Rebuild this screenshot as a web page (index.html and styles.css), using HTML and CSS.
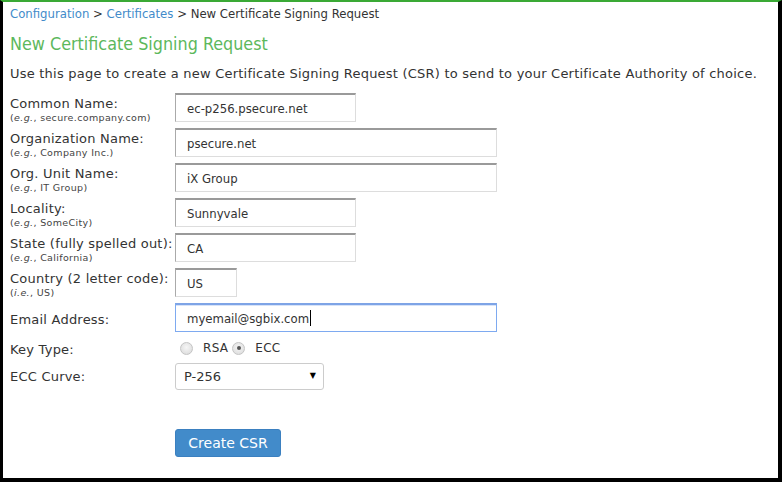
FILE: index.html
```html
<!DOCTYPE html>
<html>
<head>
<meta charset="utf-8">
<link rel="stylesheet" href="styles.css">
</head>
<body>
<div class="frame">
  <div class="crumb"><a href="#">Configuration</a> &gt; <a href="#">Certificates</a> &gt; New Certificate Signing Request</div>
  <h1 class="title">New Certificate Signing Request</h1>
  <p class="intro">Use this page to create a new Certificate Signing Request (CSR) to send to your Certificate Authority of choice.</p>
  <form class="form">
    <div class="row">
      <label class="label">Common Name:<span class="hint">(<i>e.g.</i>, secure.company.com)</span></label>
      <input class="field w-md" type="text" value="ec-p256.psecure.net">
    </div>
    <div class="row">
      <label class="label">Organization Name:<span class="hint">(<i>e.g.</i>, Company Inc.)</span></label>
      <input class="field w-lg" type="text" value="psecure.net">
    </div>
    <div class="row">
      <label class="label">Org. Unit Name:<span class="hint">(<i>e.g.</i>, IT Group)</span></label>
      <input class="field w-lg" type="text" value="iX Group">
    </div>
    <div class="row">
      <label class="label">Locality:<span class="hint">(<i>e.g.</i>, SomeCity)</span></label>
      <input class="field w-md" type="text" value="Sunnyvale">
    </div>
    <div class="row">
      <label class="label">State (fully spelled out):<span class="hint">(<i>e.g.</i>, California)</span></label>
      <input class="field w-md" type="text" value="CA">
    </div>
    <div class="row">
      <label class="label">Country (2 letter code):<span class="hint">(<i>i.e.</i>, US)</span></label>
      <input class="field w-sm" type="text" value="US">
    </div>
    <div class="row">
      <label class="label single">Email Address:</label>
      <div class="field w-lg focus">myemail@sgbix.com<span class="caret"></span></div>
    </div>
    <div class="row row-radio">
      <label class="label single">Key Type:</label>
      <div class="radios">
        <input class="radio" type="radio" name="kt" id="rsa"><label for="rsa" class="rlabel">RSA</label>
        <input class="radio" type="radio" name="kt" id="ecc" checked><label for="ecc" class="rlabel">ECC</label>
      </div>
    </div>
    <div class="row row-select">
      <label class="label single">ECC Curve:</label>
      <span class="select-wrap"><select class="select"><option>P-256</option><option>P-384</option></select></span>
    </div>
    <div class="actions">
      <button type="button" class="btn">Create CSR</button>
    </div>
  </form>
</div>
</body>
</html>
```
FILE: styles.css
```css
* { box-sizing: border-box; }
html, body { margin: 0; padding: 0; background: #fff; }
body { font-family: "DejaVu Sans", Verdana, sans-serif; color: #333; }

.frame {
  width: 782px;
  height: 482px;
  border-top: 2px solid #3aa935;
  border-left: 3px solid #000;
  border-right: 4px solid #000;
  border-bottom: 4px solid #000;
  padding: 2px 7px 0;
}

.crumb {
  font-family: "DejaVu Sans Condensed", "DejaVu Sans", sans-serif;
  font-size: 13px;
  line-height: 20px;
  color: #333;
}
.crumb a { color: #428bca; text-decoration: none; }

.title {
  margin: 8px 0 0;
  font-family: "DejaVu Sans Condensed", "DejaVu Sans", sans-serif;
  font-size: 17.8px;
  line-height: 24px;
  font-weight: normal;
  color: #5cb85c;
}

.intro { margin: 8px 0 0; font-size: 13px; line-height: 20px; letter-spacing: 0.22px; }

.form { margin-top: 9px; display: flex; flex-direction: column; }

.row { display: flex; align-items: flex-start; height: 29px; margin-bottom: 6px; }

.label {
  width: 165px;
  flex: none;
  font-size: 13px;
  line-height: 16px;
  letter-spacing: 0.22px;
  padding-top: 3px;
  white-space: nowrap;
  display: flex;
  flex-direction: column;
}
.label.single { padding-top: 2px; line-height: 29px; }

.hint { font-size: 9.5px; line-height: 12px; letter-spacing: 0.35px; color: #444; }

.field {
  height: 29px;
  border: 1px solid #ddd;
  border-top: 2px solid #9a9a9a;
  border-left: 1px solid #aaa;
  padding: 0 11px;
  font-family: "DejaVu Sans Condensed", "DejaVu Sans", sans-serif;
  font-size: 13px;
  color: #333;
  background: #fff;
  outline: none;
}
.w-sm { width: 62px; }
.w-md { width: 181px; }
.w-lg { width: 322px; }

.focus {
  display: flex;
  align-items: center;
  border: 1px solid #7eaaf0;
  border-top: 2px solid #7ea4e6;
  box-shadow: inset 0 1px 0 #d7e3f8;
}
.caret { width: 1px; height: 16px; background: #000; margin-left: 1px; }

.row-radio { height: 20px; margin-bottom: 5px; }
.row-radio .label.single { line-height: 20px; padding-top: 2px; }
.radios { display: flex; align-items: center; height: 20px; padding-left: 5px; font-size: 12px; }
.radio {
  appearance: none;
  -webkit-appearance: none;
  width: 13px;
  height: 13px;
  margin: 0;
  border-radius: 50%;
  border: 1px solid #c4c4c4;
  background: radial-gradient(circle at 50% 40%, #f6f6f6 0%, #d8d8d8 100%);
  position: relative;
}
.radio:checked::after {
  content: "";
  position: absolute;
  left: 3.5px; top: 3.5px;
  width: 4px; height: 4px;
  border-radius: 50%;
  background: #555;
}
.rlabel { margin-left: 10px; margin-right: 4px; color: #333; letter-spacing: 0.3px; }

.row-select { height: 27px; }
.row-select .label.single { line-height: 27px; padding-top: 0; }
.select-wrap { position: relative; display: inline-block; }
.select-wrap::after {
  content: "▼";
  position: absolute;
  right: 8px;
  top: 8px;
  font-size: 8px;
  color: #000;
  pointer-events: none;
}
.select {
  appearance: none;
  -webkit-appearance: none;
  width: 149px;
  height: 27px;
  border: 1px solid #ccc;
  border-radius: 3px;
  background: #fff;
  padding: 0 8px;
  font-family: "DejaVu Sans", Verdana, sans-serif;
  font-size: 13px;
  color: #333;
}

.actions { padding-left: 165px; margin-top: 33px; }
.btn {
  width: 106px;
  height: 28px;
  border: 1px solid #3b80c0;
  border-radius: 3px;
  background: #428bca;
  color: #fff;
  font-family: "DejaVu Sans", Verdana, sans-serif;
  font-size: 14px;
  padding: 0;
}
```
